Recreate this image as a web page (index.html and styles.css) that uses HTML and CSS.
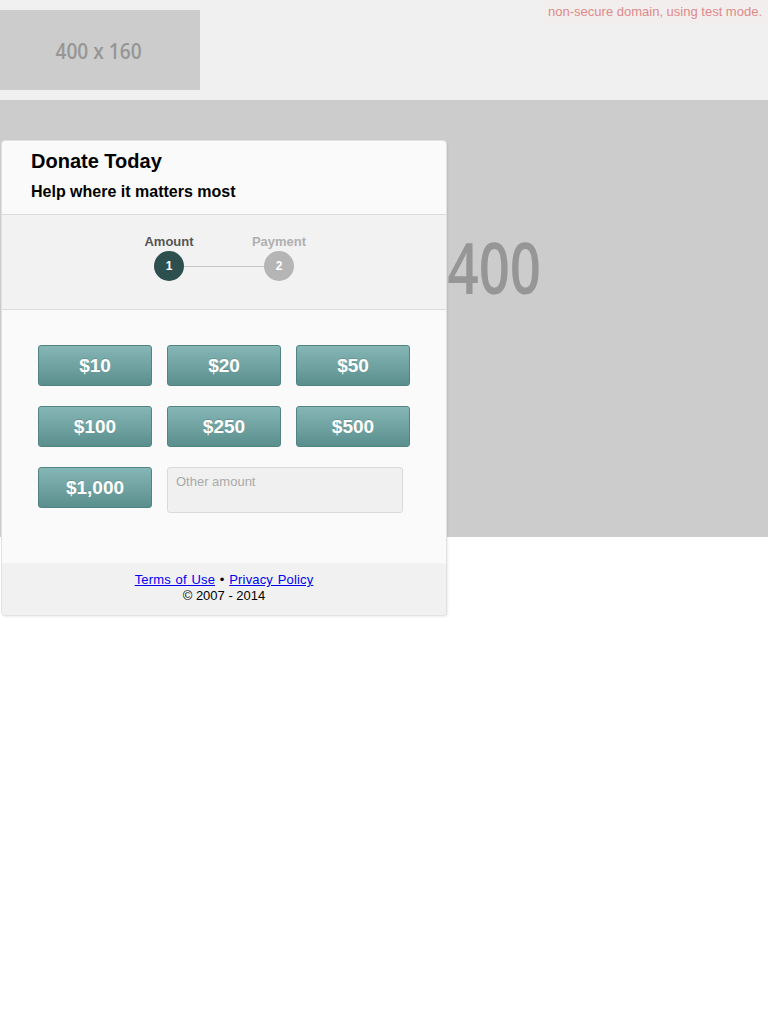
FILE: index.html
```html
<!DOCTYPE html>
<html lang="en">
<head>
<meta charset="utf-8">
<title>Donate Today</title>
<link rel="stylesheet" href="styles.css">
</head>
<body>
<div class="notice">non-secure domain, using test mode.</div>
<header class="topbar">
  <div class="logo"><span class="logo-text">400 x 160</span></div>
</header>
<section class="stage">
  <div class="hero">
    <div class="hero-text">1400 x 400</div>
  </div>
  <div class="card">
    <div class="card-head">
      <h1 class="title">Donate Today</h1>
      <h2 class="subtitle">Help where it matters most</h2>
    </div>
    <div class="steps">
      <div class="step-labels">
        <span class="step-label active">Amount</span>
        <span class="step-label">Payment</span>
      </div>
      <div class="track">
        <span class="dot active">1</span>
        <span class="line"></span>
        <span class="dot">2</span>
      </div>
    </div>
    <div class="amounts">
      <button class="amt">$10</button>
      <button class="amt">$20</button>
      <button class="amt">$50</button>
      <button class="amt">$100</button>
      <button class="amt">$250</button>
      <button class="amt">$500</button>
      <button class="amt">$1,000</button>
      <input class="other" type="text" placeholder="Other amount">
    </div>
    <footer class="card-foot">
      <div class="links"><a href="#">Terms of Use</a> &bull; <a href="#">Privacy Policy</a></div>
      <div>&copy; 2007 - 2014</div>
    </footer>
  </div>
</section>
</body>
</html>
```

FILE: styles.css
```css
* { box-sizing: border-box; }
html, body { margin: 0; padding: 0; background: #fff; }
body {
  font-family: "Liberation Sans", Arial, sans-serif;
  color: #000;
  min-height: 1024px;
}

.notice {
  position: absolute;
  top: 0;
  right: 0;
  width: 225px;
  height: 25px;
  padding: 4px 6px 0 5px;
  background: #f3eeee;
  color: #dc8a8a;
  font-size: 13px;
  line-height: 16px;
  text-align: right;
}

.topbar {
  height: 100px;
  background: #f0f0f0;
  padding-top: 10px;
}
.logo {
  width: 200px;
  height: 80px;
  background: #cccccc;
  display: flex;
  align-items: center;
  justify-content: center;
  padding-right: 2px;
}
.logo-text {
  display: inline-block;
  font-family: "Open Sans", "Liberation Sans", sans-serif;
  font-weight: 600;
  font-size: 22px;
  line-height: 24px;
  color: #969696;
  white-space: nowrap;
  transform: scaleX(0.87);
}

.stage {
  display: grid;
  grid-template-columns: 100%;
  grid-template-rows: auto;
}
.hero {
  grid-area: 1 / 1;
  align-self: start;
  height: 437px;
  background: #cccccc;
  display: flex;
  justify-content: flex-end;
  padding: 132px 227px 0 0;
}
.hero-text {
  font-family: "Open Sans", "Liberation Sans", sans-serif;
  font-weight: 600;
  font-size: 70px;
  line-height: 70px;
  height: 70px;
  color: #969696;
  white-space: nowrap;
  transform: scaleX(0.78);
  transform-origin: right center;
}

.card {
  grid-area: 1 / 1;
  align-self: start;
  justify-self: start;
  position: relative;
  z-index: 1;
  margin: 40px 0 0 1px;
  width: 446px;
  background: #fafafa;
  border: 1px solid #e2e2e2;
  border-radius: 4px;
  box-shadow: 1px 1px 2px rgba(0,0,0,0.08);
}

.card-head {
  padding: 8px 29px 12px;
  border-bottom: 1px solid #dcdcdc;
}
.title {
  margin: 0;
  font-size: 20px;
  line-height: 24px;
  font-weight: bold;
}
.subtitle {
  margin: 9px 0 0;
  font-size: 16px;
  line-height: 20px;
  font-weight: bold;
}

.steps {
  background: #f2f2f2;
  border-bottom: 1px solid #dcdcdc;
  padding: 19px 0 28px;
  display: flex;
  flex-direction: column;
  align-items: center;
}
.step-labels {
  display: flex;
}
.step-label {
  width: 110px;
  text-align: center;
  font-size: 13px;
  line-height: 15px;
  font-weight: bold;
  color: #b0b0b0;
}
.step-label.active { color: #555; }
.track {
  display: flex;
  align-items: center;
  margin-top: 2px;
}
.dot {
  width: 30px;
  height: 30px;
  border-radius: 50%;
  background: #b5b5b5;
  color: #fff;
  font-size: 12px;
  font-weight: bold;
  display: flex;
  align-items: center;
  justify-content: center;
}
.dot.active { background: #2d4f4e; }
.line {
  width: 80px;
  height: 1px;
  background: #c8c8c8;
}

.amounts {
  display: grid;
  grid-template-columns: 114px 114px 114px;
  column-gap: 15px;
  row-gap: 20px;
  padding: 35px 0 50px 36px;
  align-items: start;
}
.amt {
  height: 41px;
  margin: 0;
  padding: 0;
  border: 1px solid #4f8482;
  border-radius: 3px;
  background: linear-gradient(#86b6b6, #5a8f8d);
  color: #fff;
  font-family: "Liberation Sans", Arial, sans-serif;
  font-size: 19px;
  font-weight: bold;
  text-shadow: 0 -1px 0 rgba(0,0,0,0.15);
  cursor: pointer;
}
.other {
  grid-column: 2 / span 2;
  width: 236px;
  height: 46px;
  margin: 0;
  padding: 5px 8px 23px;
  border: 1px solid #dadada;
  border-radius: 3px;
  background: #f0f0f0;
  font-family: "Liberation Sans", Arial, sans-serif;
  font-size: 13px;
  line-height: 16px;
}
.other::placeholder { color: #aaa; }

.card-foot {
  background: #f1f1f1;
  border-radius: 0 0 4px 4px;
  padding: 9px 0 11px;
  text-align: center;
  font-size: 13px;
  line-height: 16px;
  color: #000;
}
.links { word-spacing: 1px; letter-spacing: 0.15px; }
.card-foot a { color: #0000ee; text-decoration: underline; }
```
